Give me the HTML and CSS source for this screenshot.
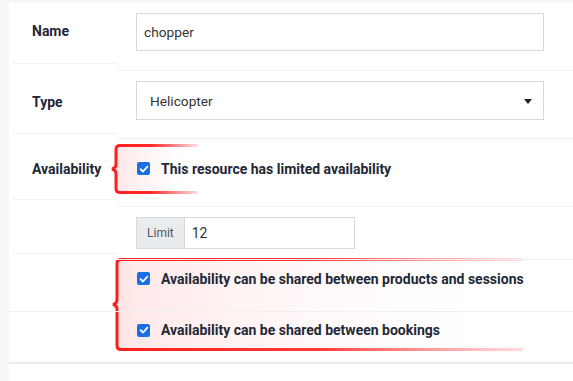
FILE: index.html
```html
<!DOCTYPE html>
<html>
<head>
<meta charset="utf-8">
<link rel="stylesheet" href="styles.css">
</head>
<body>
<div class="panel">
  <div class="row r1">
    <div class="label l1">Name</div>
    <div class="field f1"><div class="input">chopper</div></div>
  </div>
  <div class="row r2">
    <div class="label l2">Type</div>
    <div class="field f2"><div class="input select">Helicopter<span class="caret"></span></div></div>
  </div>
  <div class="row r3">
    <div class="label l3">Availability</div>
    <div class="field f3"><label class="check"><span class="box"><svg viewBox="0 0 12 12" width="12" height="12"><path d="M2.6 6.2 L5 8.5 L9.4 3.6" fill="none" stroke="#fff" stroke-width="1.8" stroke-linecap="round" stroke-linejoin="round"/></svg></span>This resource has limited availability</label></div>
  </div>
  <div class="row r4">
    <div class="label l4"></div>
    <div class="field f4"><div class="group"><span class="addon">Limit</span><span class="gval">12</span></div></div>
  </div>
  <div class="row r5">
    <div class="label l5"></div>
    <div class="field f5"><label class="check"><span class="box"><svg viewBox="0 0 12 12" width="12" height="12"><path d="M2.6 6.2 L5 8.5 L9.4 3.6" fill="none" stroke="#fff" stroke-width="1.8" stroke-linecap="round" stroke-linejoin="round"/></svg></span>Availability can be shared between products and sessions</label></div>
  </div>
  <div class="row r6">
    <div class="label l6"></div>
    <div class="field f6"><label class="check"><span class="box"><svg viewBox="0 0 12 12" width="12" height="12"><path d="M2.6 6.2 L5 8.5 L9.4 3.6" fill="none" stroke="#fff" stroke-width="1.8" stroke-linecap="round" stroke-linejoin="round"/></svg></span>Availability can be shared between bookings</label></div>
  </div>
</div>

<svg class="brace brace1" width="90" height="54" viewBox="0 0 90 54">
  <defs>
    <linearGradient id="s1" x1="0" y1="0" x2="1" y2="0">
      <stop offset="0" stop-color="#ff1e1e"/>
      <stop offset="0.45" stop-color="#ff2a2a"/>
      <stop offset="1" stop-color="#ff2a2a" stop-opacity="0.15"/>
    </linearGradient>
    <linearGradient id="g1" x1="0" y1="0" x2="1" y2="0">
      <stop offset="0" stop-color="#ffe3e3"/>
      <stop offset="1" stop-color="#ffffff" stop-opacity="0"/>
    </linearGradient>
  </defs>
  <path d="M90 3.5 H12 Q8 3.5 8 7.5 V22.5 Q8 26 4 27 Q8 28 8 31.5 V46.5 Q8 50.5 12 50.5 H90 Z" fill="url(#g1)" stroke="none"/>
  <path d="M90 3.5 H12 Q8 3.5 8 7.5 V22.5 Q8 26 4 27 Q8 28 8 31.5 V46.5 Q8 50.5 12 50.5 H90" fill="none" stroke="url(#s1)" stroke-width="3"/>
</svg>

<svg class="brace brace2" width="416" height="98" viewBox="0 0 416 98">
  <defs>
    <linearGradient id="s2" x1="0" y1="0" x2="1" y2="0">
      <stop offset="0" stop-color="#ff1e1e"/>
      <stop offset="0.5" stop-color="#ff3a3a"/>
      <stop offset="1" stop-color="#ff5a5a" stop-opacity="0.2"/>
    </linearGradient>
    <linearGradient id="g2" x1="0" y1="0" x2="1" y2="0">
      <stop offset="0" stop-color="#ffe6e6"/>
      <stop offset="1" stop-color="#ffffff" stop-opacity="0"/>
    </linearGradient>
  </defs>
  <path d="M416 3.5 H14 Q10 3.5 10 7.5 V44 Q10 47.5 6 48.5 Q10 49.5 10 53 V89.5 Q10 93.5 14 93.5 H416 Z" fill="url(#g2)" stroke="none"/>
  <path d="M416 3.5 H14 Q10 3.5 10 7.5 V44 Q10 47.5 6 48.5 Q10 49.5 10 53 V89.5 Q10 93.5 14 93.5 H416" fill="none" stroke="url(#s2)" stroke-width="3"/>
</svg>
</body>
</html>
```

FILE: styles.css
```css
html, body {
  margin: 0;
  padding: 0;
}
body {
  background: #f7f7f7;
  font-family: Roboto, "Liberation Sans", sans-serif;
  color: #222836;
  width: 573px;
  height: 381px;
  overflow: hidden;
  position: relative;
}
.panel {
  margin: 3px 0 0 9px;
  background: #fff;
  height: 378px;
  display: flex;
  flex-direction: column;
}
.row {
  display: flex;
  align-items: flex-start;
  position: relative;
  z-index: 1;
}
.label {
  width: 85px;
  margin-left: 3px;
  padding-left: 20px;
  box-sizing: content-box;
  font-size: 14px;
  font-weight: 700;
  display: flex;
  align-items: center;
  border-bottom: 1px solid #f3f3f3;
}
.field {
  flex: 1;
  padding-left: 19px;
  padding-right: 29px;
  border-bottom: 1px solid #f1f1f1;
  display: flex;
  align-items: center;
}
.l1 { height: 60px; padding-bottom: 0; }
.r1 .label { align-items: flex-start; padding-top: 20px; height: 40px; }
.f1 { padding-top: 10px; padding-bottom: 19px; }
.l2 { height: 62px; }
.f2 { padding-top: 10px; padding-bottom: 18px; }
.l3 { height: 60px; }
.f3 { height: 68px; padding-bottom: 8px; box-sizing: border-box; }
.l4 { height: 46px; }
.f4 { padding-top: 10px; padding-bottom: 10px; }
.r5 .label, .r6 .label { border-bottom: none; }
.r5 { border-bottom: 1px solid #f1f1f1; }
.f5 { border-bottom: none; height: 51px; padding-bottom: 14px; box-sizing: border-box; }
.r5 .label { height: 51px; }
.r6 { border-bottom: 2px solid #ebebeb; }
.f6 { border-bottom: none; height: 50px; padding-bottom: 14px; box-sizing: border-box; }
.r6 .label { height: 50px; }

.input {
  flex: 1;
  height: 38px;
  box-sizing: border-box;
  border: 1px solid #d9d9d9;
  padding: 0 7px;
  font-size: 13.7px;
  color: #333;
  display: flex;
  align-items: center;
  background: #fff;
}
.select {
  height: 39px;
  padding-left: 13px;
  position: relative;
}
.caret {
  position: absolute;
  right: 11px;
  top: 17px;
  width: 0;
  height: 0;
  border-left: 4.5px solid transparent;
  border-right: 4.5px solid transparent;
  border-top: 5px solid #1e2330;
}
.check {
  display: flex;
  align-items: center;
  font-size: 14px;
  font-weight: 700;
  color: #222836;
  margin-left: 1px;
}
.box {
  width: 13px;
  height: 13px;
  border-radius: 2px;
  background: #1a6fe6;
  display: flex;
  align-items: center;
  justify-content: center;
  margin-right: 11px;
}
.box svg { display: block; }
.group {
  display: flex;
  height: 32px;
  width: 219px;
  box-sizing: border-box;
  border: 1px solid #d9d9d9;
  background: #fff;
}
.addon {
  background: #e9ecef;
  border-right: 1px solid #d9d9d9;
  font-size: 12px;
  color: #555;
  padding: 0 10px;
  display: flex;
  align-items: center;
}
.gval {
  font-size: 14px;
  color: #333;
  padding-left: 7px;
  display: flex;
  align-items: center;
}
.brace {
  position: absolute;
  z-index: 0;
}
.brace1 { left: 108px; top: 142px; }
.brace2 { left: 107px; top: 256px; }
```
